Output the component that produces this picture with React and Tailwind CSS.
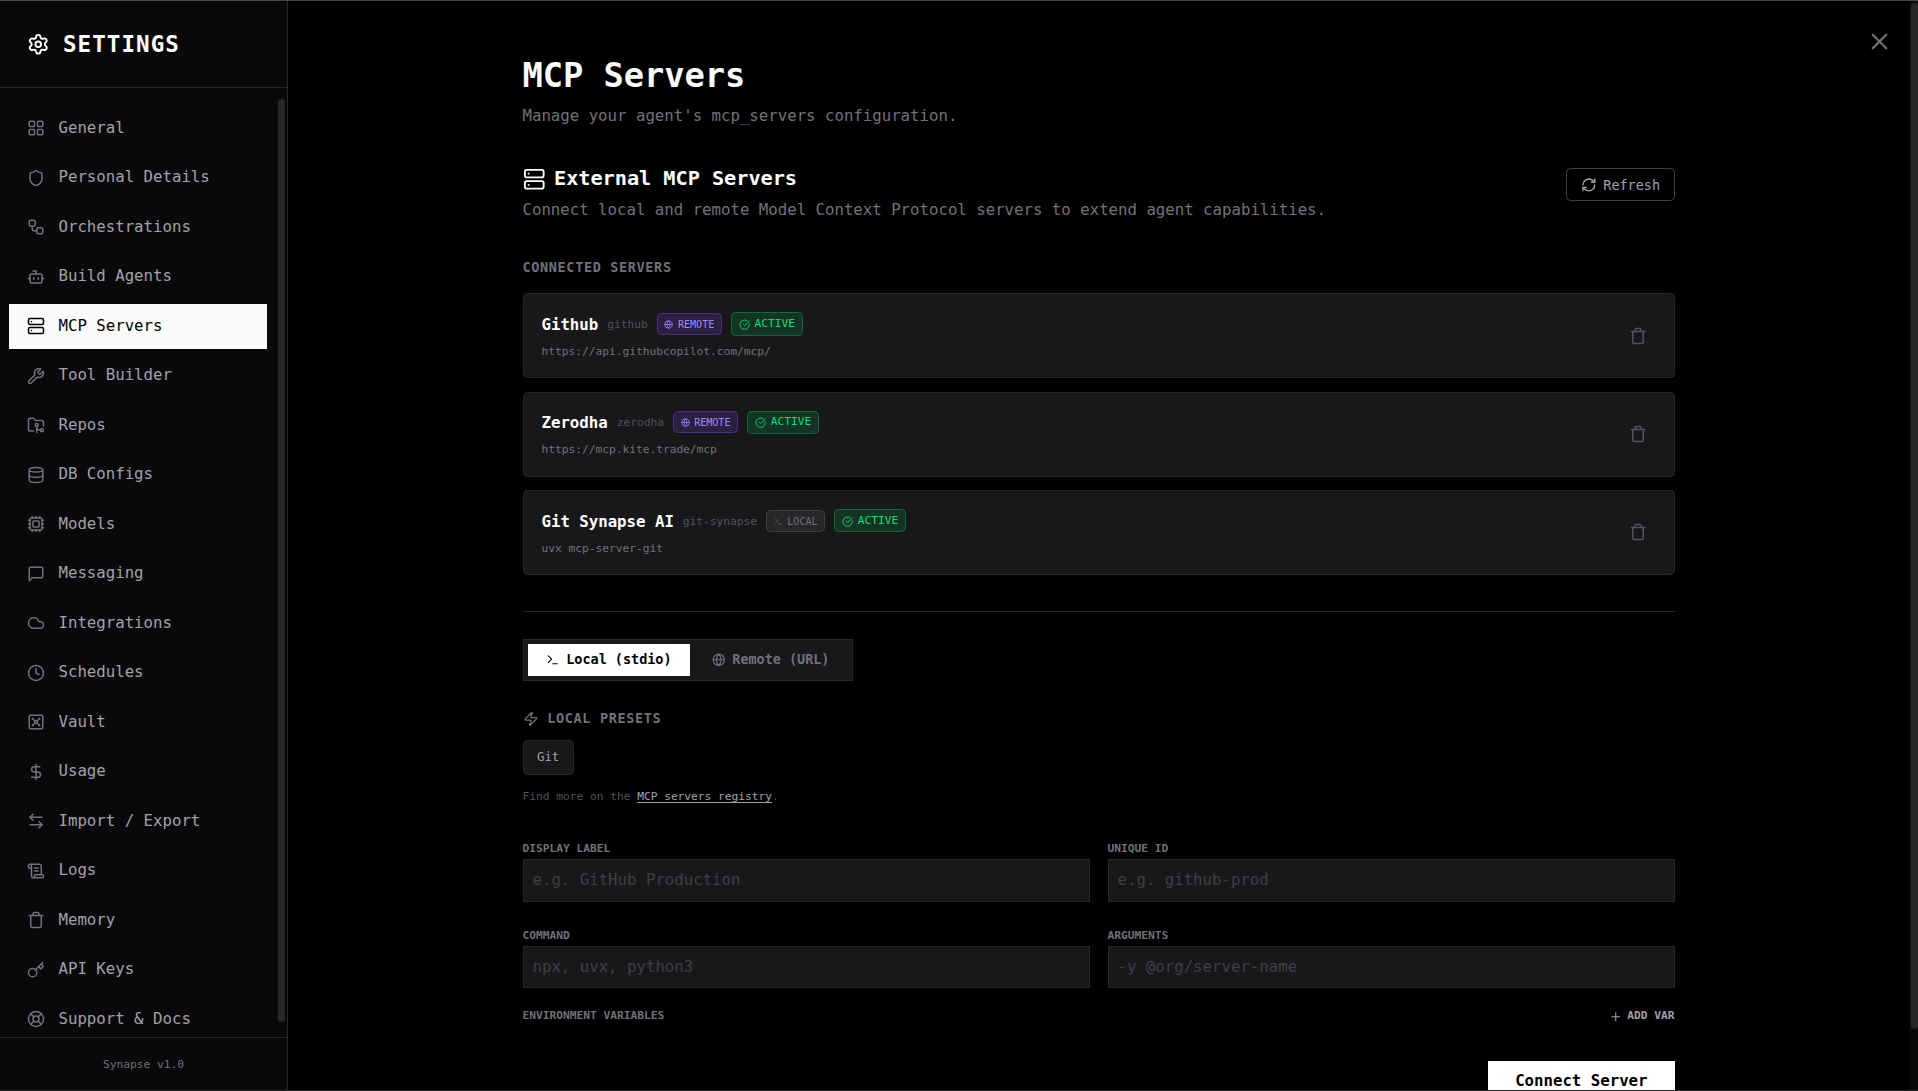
import React from "react";
import {
  Settings, LayoutGrid, Shield, Workflow, Bot, Server, Wrench, FolderGit2, Database, Cpu,
  Cloud, Clock, Vault, DollarSign, ArrowLeftRight, ScrollText, Trash, Key, LifeBuoy,
  X, RefreshCw, Globe, CircleCheckBig, Terminal, Zap, Plus,
} from "lucide-react";

function MessageBox({ className, strokeWidth = 2 }) {
  return (
    <svg className={className} viewBox="0 0 24 24" fill="none" stroke="currentColor" strokeWidth={strokeWidth} strokeLinecap="round" strokeLinejoin="round">
      <path d="M21 15a2 2 0 0 1-2 2H7l-4 4V5a2 2 0 0 1 2-2h14a2 2 0 0 1 2 2z" />
    </svg>
  );
}

const NAV = [
  ["General", LayoutGrid],
  ["Personal Details", Shield],
  ["Orchestrations", Workflow],
  ["Build Agents", Bot],
  ["MCP Servers", Server],
  ["Tool Builder", Wrench],
  ["Repos", FolderGit2],
  ["DB Configs", Database],
  ["Models", Cpu],
  ["Messaging", MessageBox],
  ["Integrations", Cloud],
  ["Schedules", Clock],
  ["Vault", Vault],
  ["Usage", DollarSign],
  ["Import / Export", ArrowLeftRight],
  ["Logs", ScrollText],
  ["Memory", Trash],
  ["API Keys", Key],
  ["Support & Docs", LifeBuoy],
];

const SERVERS = [
  { name: "Github", id: "github", remote: true, target: "https://api.githubcopilot.com/mcp/" },
  { name: "Zerodha", id: "zerodha", remote: true, target: "https://mcp.kite.trade/mcp" },
  { name: "Git Synapse AI", id: "git-synapse", remote: false, target: "uvx mcp-server-git" },
];

function Sidebar() {
  return (
    <aside className="flex w-64 shrink-0 flex-col border-r border-[#27272a] bg-[#09090b]">
      <div className="flex shrink-0 items-center gap-3 border-b border-[#27272a] p-6">
        <Settings className="size-5 text-white" strokeWidth={2} />
        <h2 className="pt-px text-xl font-bold leading-[27px] tracking-[0.95px] text-white">SETTINGS</h2>
      </div>
      <div className="flex min-h-0 flex-1 overflow-hidden">
        <nav className="flex flex-1 flex-col gap-1 py-4 pl-2 pr-2">
          {NAV.map(([label, Icon]) => {
            const active = label === "MCP Servers";
            return (
              <button
                key={label}
                className={
                  active
                    ? "flex h-10 shrink-0 items-center gap-3 bg-[#fafafa] px-4 text-left text-sm text-black"
                    : "flex h-10 shrink-0 items-center gap-3 px-4 text-left text-sm text-[#a1a1aa]"
                }
              >
                <Icon className={active ? "size-4 text-black" : "size-4 text-[#71717a]"} strokeWidth={2} />
                <span>{label}</span>
              </button>
            );
          })}
        </nav>
        <div className="flex w-[9.5px] shrink-0 flex-col items-center pb-[13px] pt-[10px]">
          <div className="w-[6.3px] flex-1 rounded-full bg-[#27272a]" />
        </div>
      </div>
      <div className="shrink-0 border-t border-[#27272a] px-4 pb-[14.5px] pt-[17px] text-center text-[10px] leading-[15px] text-[#71717a]">
        Synapse v1.0
      </div>
    </aside>
  );
}

function ServerCard({ name, id, remote, target }) {
  return (
    <div className="flex h-[75.5px] items-start justify-between rounded border border-[#27272a] bg-[#18181b] p-4">
      <div>
        <div className="flex items-center gap-2">
          <span className="pt-px text-sm font-bold leading-[19px] text-white">{name}</span>
          <span className="pt-[1.5px] text-[10px] leading-[14px] text-[#52525b]">{id}</span>
          {remote ? (
            <span className="flex items-center gap-1 rounded border border-[#4c2a85] bg-[#2a2040] px-1.5 pb-[1.5px] pt-[2.5px] text-[9px] leading-[13.5px] text-[#a684ff]">
              <Globe className="size-2" /> REMOTE
            </span>
          ) : (
            <span className="flex items-center gap-1 rounded border border-[#3f3f46] bg-[#27272a] px-1.5 pb-[1.5px] pt-[2.5px] text-[9px] leading-[13.5px] text-[#71717a]">
              <Terminal className="size-2" /> LOCAL
            </span>
          )}
          <span className="flex items-center gap-1 rounded border border-[#0d6b35] bg-[#143525] px-1.5 pb-[1.5px] pt-[2.5px] text-[10px] leading-[15px] text-[#05df72]">
            <CircleCheckBig className="size-2.5" /> ACTIVE
          </span>
        </div>
        <p className="mt-[7.5px] text-[10px] leading-[15px] text-[#71717a]">{target}</p>
      </div>
      <button className="self-center p-2 text-[#52525b]">
        <Trash className="size-4" strokeWidth={2} />
      </button>
    </div>
  );
}

function Field({ label, placeholder }) {
  return (
    <label className="flex flex-1 flex-col">
      <span className="text-[10px] font-bold leading-[15px] text-[#71717a]">{label}</span>
      <input
        placeholder={placeholder}
        className="mt-px border border-[#27272a] bg-[#18181b] p-2 text-sm leading-5 text-white outline-none placeholder:text-[#3f3f46]"
      />
    </label>
  );
}

function Main() {
  return (
    <main className="relative flex min-w-0 flex-1 bg-black">
      <div className="min-w-0 flex-1 overflow-hidden">
        <div className="mx-auto w-[1024px] pt-[49px]">
          <h1 className="text-3xl font-bold leading-9 tracking-[-0.06px] text-[#fafafa]">MCP Servers</h1>
          <p className="mt-[7px] text-sm text-[#71717a]">Manage your agent's mcp_servers configuration.</p>

          <div className="mt-8 flex items-start justify-between">
            <div>
              <h3 className="flex items-center gap-2 text-lg font-bold tracking-[-0.036px] text-white">
                <Server className="size-5" strokeWidth={2} /> External MCP Servers
              </h3>
              <p className="mt-1 text-sm text-[#71717a]">
                Connect local and remote Model Context Protocol servers to extend agent capabilities.
              </p>
            </div>
            <button className="mt-[4.4px] flex items-center gap-1.5 rounded border border-[#3f3f46] px-3 py-1.5 text-xs leading-4 text-[#a1a1aa]">
              <RefreshCw className="size-3.5" strokeWidth={2} /> Refresh
            </button>
          </div>

          <h4 className="mt-[33px] text-xs font-bold tracking-[0.575px] text-[#71717a]">CONNECTED SERVERS</h4>
          <div className="mt-[14.7px] flex flex-col gap-3">
            {SERVERS.map((s) => <ServerCard key={s.id} {...s} />)}
          </div>

          <div className="mt-8 border-t border-[#27272a]" />

          <div className="mt-6 flex w-fit gap-1 border border-[#27272a] bg-[#18181b] p-1 text-xs font-bold">
            <button className="flex items-center gap-1.5 bg-white px-4 py-1.5 text-black">
              <Terminal className="size-3" /> Local (stdio)
            </button>
            <button className="flex items-center gap-1.5 px-4 py-1.5 text-[#71717a]">
              <Globe className="size-3" /> Remote (URL)
            </button>
          </div>

          <h4 className="mt-[25.4px] flex items-center gap-2 text-xs font-bold tracking-[0.575px] text-[#71717a]">
            <Zap className="size-3.5" strokeWidth={2} /> LOCAL PRESETS
          </h4>
          <button className="mt-[11px] rounded border border-[#27272a] bg-[#18181b] px-3 py-1.5 text-[11px] leading-[17px] text-[#a1a1aa]">
            Git
          </button>
          <p className="mt-[12.8px] text-[10px] leading-[15px] text-[#52525b]">
            Find more on the <a className="text-[#a1a1aa] underline underline-offset-2">MCP servers registry</a>.
          </p>

          <div className="mt-[31.2px] flex gap-4">
            <Field label="DISPLAY LABEL" placeholder="e.g. GitHub Production" />
            <Field label="UNIQUE ID" placeholder="e.g. github-prod" />
          </div>
          <div className="mt-[23.2px] flex gap-4">
            <Field label="COMMAND" placeholder="npx, uvx, python3" />
            <Field label="ARGUMENTS" placeholder="-y @org/server-name" />
          </div>
          <div className="mt-[17.6px] flex items-center justify-between text-[10px] font-bold leading-[15px]">
            <span className="text-[#71717a]">ENVIRONMENT VARIABLES</span>
            <button className="flex items-center gap-1 text-[#a1a1aa]">
              <Plus className="size-3" strokeWidth={2} /> ADD VAR
            </button>
          </div>
          <div className="mt-[31.5px] flex justify-end">
            <button className="bg-white px-6 py-2 text-sm font-bold text-black">Connect Server</button>
          </div>
        </div>
      </div>
      <div className="flex w-2 shrink-0 flex-col items-end bg-[#09090b] pb-[54px] pt-[2px]">
        <div className="w-[6.3px] flex-1 rounded-full bg-[#27272a]" />
      </div>
      <button className="absolute right-[22.4px] top-6 text-[#71717a]">
        <X className="size-6" strokeWidth={2} />
      </button>
    </main>
  );
}

export default function App() {
  return (
    <div className="h-screen w-full overflow-hidden bg-black">
      <div className="flex h-full w-full overflow-hidden border-b border-t border-b-[#27272a] border-t-[#464646] font-['DejaVu_Sans_Mono',monospace] tracking-[-0.026px] [zoom:1.125]">
        <Sidebar />
        <Main />
      </div>
    </div>
  );
}
